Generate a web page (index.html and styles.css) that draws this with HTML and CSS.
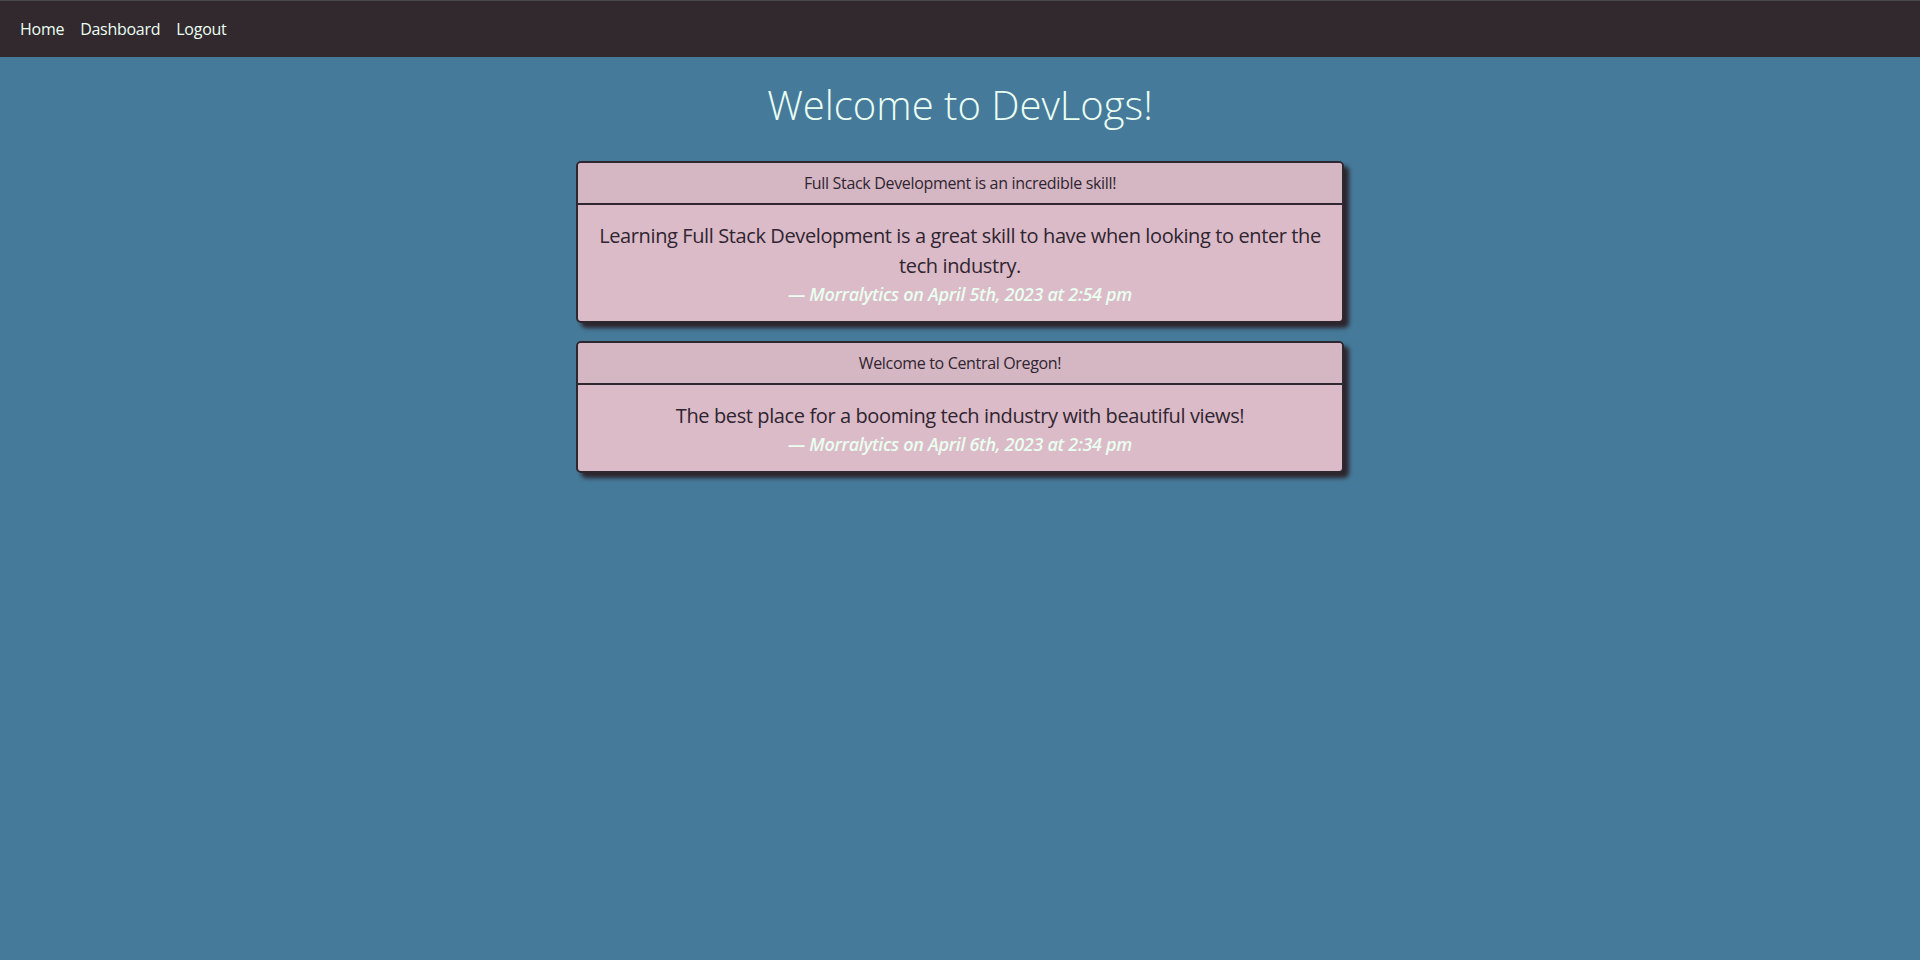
FILE: index.html
```html
<!DOCTYPE html>
<html lang="en">
<head>
<meta charset="utf-8">
<title>DevLogs</title>
<link rel="stylesheet" href="styles.css">
</head>
<body>
<nav class="topnav">
  <a class="navlink" href="#">Home</a>
  <a class="navlink" href="#">Dashboard</a>
  <a class="navlink" href="#">Logout</a>
</nav>
<main class="content">
  <h1 class="title">Welcome to DevLogs!</h1>
  <section class="posts">
    <article class="post">
      <header class="post-head">Full Stack Development is an incredible skill!</header>
      <div class="post-body">
        <p class="post-text">Learning Full Stack Development is a great skill to have when looking to enter the tech industry.</p>
        <p class="post-meta">— Morralytics on April 5th, 2023 at 2:54 pm</p>
      </div>
    </article>
    <article class="post">
      <header class="post-head">Welcome to Central Oregon!</header>
      <div class="post-body">
        <p class="post-text">The best place for a booming tech industry with beautiful views!</p>
        <p class="post-meta">— Morralytics on April 6th, 2023 at 2:34 pm</p>
      </div>
    </article>
  </section>
</main>
</body>
</html>
```
FILE: styles.css
```css
* { box-sizing: border-box; }
html, body {
  margin: 0;
  padding: 0;
}
body {
  background: #467a9a;
  font-family: "Open Sans", "Liberation Sans", sans-serif;
  min-height: 960px;
}
.topnav {
  background: #32292f;
  border-top: 1px solid #4a4a4a;
  height: 57px;
  padding: 16px 20px 0;
  display: flex;
  gap: 16px;
  line-height: 24px;
}
.navlink {
  color: #eafff2;
  text-decoration: none;
  font-size: 16px;
  font-weight: 400;
  letter-spacing: -0.27px;
}
.content {
  display: flex;
  flex-direction: column;
  align-items: center;
}
.title {
  margin: 21px 0 29px;
  font-size: 40px;
  font-weight: 300;
  line-height: 54px;
  color: #eafff2;
}
.posts {
  width: 768px;
  display: flex;
  flex-direction: column;
  gap: 18px;
}
.post {
  border: 2px solid #2f2730;
  border-radius: 5px;
  background: #dbbbc8;
  box-shadow: 5px 5px 4px #2d252c;
  overflow: hidden;
  color: #2f2530;
  text-align: center;
}
.post-head {
  background: #d5b6c3;
  border-bottom: 2px solid #2f2730;
  height: 42px;
  padding-top: 8px;
  font-size: 16px;
  line-height: 24px;
  letter-spacing: -0.33px;
}
.post-body {
  padding: 16px 16px 13px;
}
.post-text {
  margin: 0;
  font-size: 20px;
  line-height: 30px;
  letter-spacing: -0.39px;
}
.post-meta {
  margin: 0;
  font-size: 18px;
  line-height: 27px;
  font-style: italic;
  font-weight: 600;
  letter-spacing: -0.3px;
  color: #eafff0;
}
```
